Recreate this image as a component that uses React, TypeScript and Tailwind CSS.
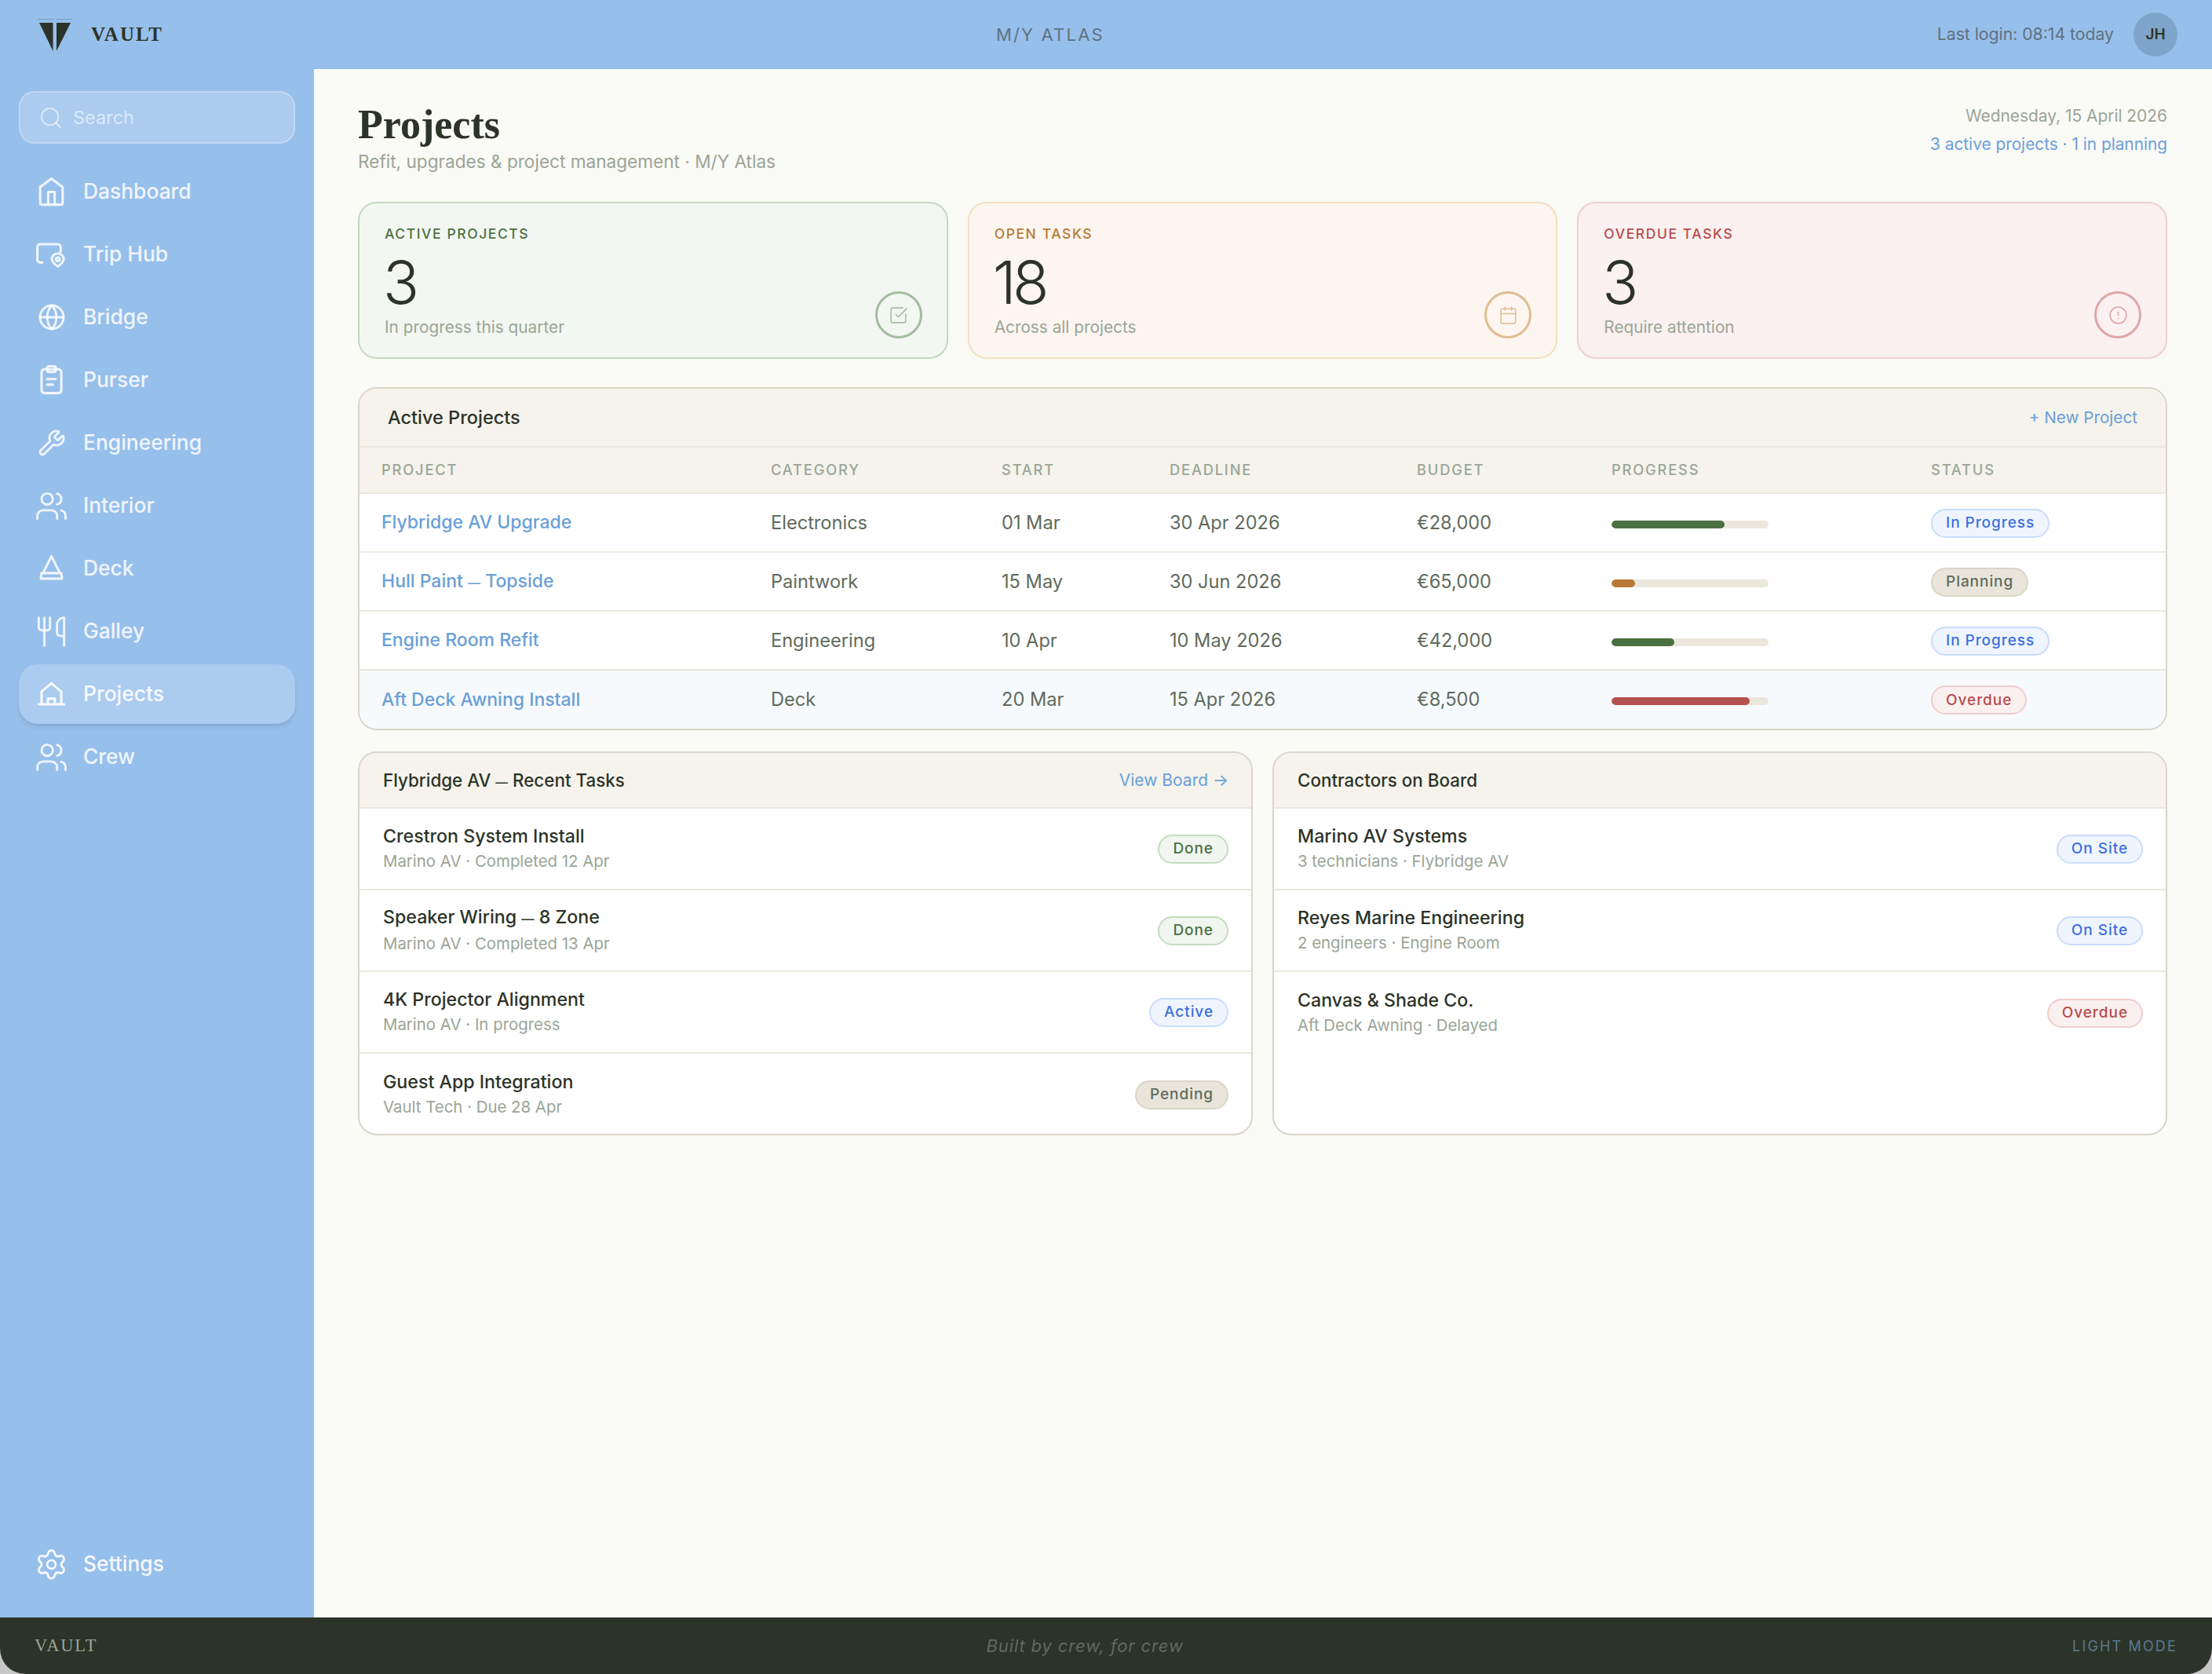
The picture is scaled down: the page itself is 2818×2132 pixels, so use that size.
import { Search, Settings, SquareCheckBig, Calendar, CircleAlert, Globe, Users, Utensils, Wrench } from "lucide-react";
import type { ReactNode } from "react";

const sans = "font-['Inter','Liberation_Sans',sans-serif]";
const serif = "font-['Liberation_Serif',serif]";

const Ico = ({ children }: { children: ReactNode }) => (
  <svg viewBox="0 0 24 24" fill="none" stroke="currentColor" strokeWidth="1.7" strokeLinecap="round" strokeLinejoin="round" className="w-[43px] h-[43px] shrink-0">
    {children}
  </svg>
);

const HomeIcon = () => (
  <Ico>
    <path d="M4 8.5l8-6 8 6V20a1 1 0 0 1-1 1H5a1 1 0 0 1-1-1z" />
    <path d="M9.7 21v-9h4.6v9" />
  </Ico>
);
const TripIcon = () => (
  <Ico>
    <path d="M5.5 17.5H4a2 2 0 0 1-2-2V6.5a2 2 0 0 1 2-2h12.5a2 2 0 0 1 2 2v3.5" />
    <path d="M16.5 11c2.3 0 4.2 1.8 4.2 4 0 2.2-2.4 4-4.2 5.3-1.8-1.3-4.2-3.1-4.2-5.3 0-2.2 1.9-4 4.2-4z" />
    <circle cx="16.5" cy="15.2" r="1.3" />
  </Ico>
);
const ClipIcon = () => (
  <Ico>
    <rect x="5" y="4" width="14" height="17" rx="2" />
    <rect x="9" y="2" width="6" height="4" rx="1" />
    <path d="M9 11h6M9 15h4" />
  </Ico>
);
const DeckIcon = () => (
  <Ico>
    <path d="M12 3L6 15M12 3l6 12M5 15h14l.5 4h-15z" />
  </Ico>
);
const ProjectIcon = () => (
  <Ico>
    <path d="M3 19h18M5 19v-9l7-6 7 6v9M9.5 19v-4h5v4" />
  </Ico>
);
const lucide = { className: "w-[43px] h-[43px] shrink-0", strokeWidth: 1.6 };
const lucideSmall = { className: "w-[36px] h-[36px] mx-[3.5px] shrink-0", strokeWidth: 1.9 };

const nav = [
  { label: "Dashboard", icon: <HomeIcon /> },
  { label: "Trip Hub", icon: <TripIcon /> },
  { label: "Bridge", icon: <Globe {...lucideSmall} /> },
  { label: "Purser", icon: <ClipIcon /> },
  { label: "Engineering", icon: <Wrench {...lucideSmall} /> },
  { label: "Interior", icon: <Users {...lucide} /> },
  { label: "Deck", icon: <DeckIcon /> },
  { label: "Galley", icon: <Utensils {...lucide} /> },
  { label: "Projects", icon: <ProjectIcon />, active: true },
  { label: "Crew", icon: <Users {...lucide} /> },
];

const stats = [
  { label: "Active Projects", value: "3", note: "In progress this quarter", card: "bg-[#f3f7f2] border-[#c3d9bf]", text: "text-[#4a7040]", ring: "border-[#a4bda0] text-[#a4bda0]", icon: <SquareCheckBig className="w-[25px] h-[25px]" strokeWidth={1.5} /> },
  { label: "Open Tasks", value: "18", note: "Across all projects", card: "bg-[#fdf6f0] border-[#f3dfbc]", text: "text-[#b87a35]", ring: "border-[#e0bd92] text-[#e0bd92]", icon: <Calendar className="w-[25px] h-[25px]" strokeWidth={1.5} /> },
  { label: "Overdue Tasks", value: "3", note: "Require attention", card: "bg-[#fbf1f1] border-[#f1cfcf]", text: "text-[#b84c4c]", ring: "border-[#dfa7a7] text-[#dfa7a7]", icon: <CircleAlert className="w-[25px] h-[25px]" strokeWidth={1.5} /> },
];

const tones = {
  blue: "bg-[#eff5ff] border-[#c8ddfc] text-[#3d6fe0]",
  grey: "bg-[#e9e5da] border-[#d9d5c8] text-[#5f6b5c]",
  red: "bg-[#fbf0f0] border-[#f1cdcd] text-[#b84c4c]",
  green: "bg-[#f1f6f0] border-[#c4dcc0] text-[#4a7040]",
};

const Badge = ({ tone, children }: { tone: keyof typeof tones; children: ReactNode }) => (
  <span className={`inline-flex items-center h-[37px] px-[17px] rounded-full border-2 text-[19px] font-medium tracking-[0.05em] whitespace-nowrap ${tones[tone]}`}>
    {children}
  </span>
);

// the em dash of the reference font is much shorter than Inter's
const Dashed = ({ text }: { text: string }) => {
  const [head, tail] = text.split(" — ");
  if (!tail) return <>{text}</>;
  return (
    <>
      {head} <span className="text-[0.7em]">—</span> {tail}
    </>
  );
};

const projects = [
  { name: "Flybridge AV Upgrade", category: "Electronics", start: "01 Mar", deadline: "30 Apr 2026", budget: "€28,000", pct: 72, bar: "bg-[#4a7040]", tone: "blue" as const, status: "In Progress" },
  { name: "Hull Paint — Topside", category: "Paintwork", start: "15 May", deadline: "30 Jun 2026", budget: "€65,000", pct: 15, bar: "bg-[#b87a35]", tone: "grey" as const, status: "Planning" },
  { name: "Engine Room Refit", category: "Engineering", start: "10 Apr", deadline: "10 May 2026", budget: "€42,000", pct: 40, bar: "bg-[#4a7040]", tone: "blue" as const, status: "In Progress" },
  { name: "Aft Deck Awning Install", category: "Deck", start: "20 Mar", deadline: "15 Apr 2026", budget: "€8,500", pct: 88, bar: "bg-[#b5524f]", tone: "red" as const, status: "Overdue", tint: true },
];

const columns = [
  { label: "Project", w: "w-[496px]" },
  { label: "Category", w: "w-[294px]" },
  { label: "Start", w: "w-[214px]" },
  { label: "Deadline", w: "w-[315px]" },
  { label: "Budget", w: "w-[248px]" },
  { label: "Progress", w: "w-[407px]" },
  { label: "Status", w: "" },
];

const tasks = [
  { title: "Crestron System Install", sub: "Marino AV · Completed 12 Apr", tone: "green" as const, badge: "Done" },
  { title: "Speaker Wiring — 8 Zone", sub: "Marino AV · Completed 13 Apr", tone: "green" as const, badge: "Done" },
  { title: "4K Projector Alignment", sub: "Marino AV · In progress", tone: "blue" as const, badge: "Active" },
  { title: "Guest App Integration", sub: "Vault Tech · Due 28 Apr", tone: "grey" as const, badge: "Pending" },
];

const contractors = [
  { title: "Marino AV Systems", sub: "3 technicians · Flybridge AV", tone: "blue" as const, badge: "On Site" },
  { title: "Reyes Marine Engineering", sub: "2 engineers · Engine Room", tone: "blue" as const, badge: "On Site" },
  { title: "Canvas & Shade Co.", sub: "Aft Deck Awning · Delayed", tone: "red" as const, badge: "Overdue" },
];

type Item = (typeof tasks)[number] | (typeof contractors)[number];

const ListCard = ({ title, action, items }: { title: string; action?: string; items: Item[] }) => (
  <div className="flex-1 h-[489px] rounded-[24px] border-2 border-[#d9d5c8] bg-white overflow-hidden">
    <div className="h-[71px] pl-[30px] pr-[29px] flex items-center justify-between bg-[#f5f3ec] border-b-2 border-[#ebe7dd]">
      <h3 className="text-[22.4px] font-medium text-[#2c3328]">
        <Dashed text={title} />
      </h3>
      {action && <span className="text-[21px] text-[#6a9fd8]">{action}</span>}
    </div>
    {items.map((item, i) => (
      <div key={item.title} className={`h-[104px] pl-[30px] pr-[29px] flex items-center justify-between ${i < 3 && i < items.length - 1 ? "border-b-2 border-[#ebe7dd]" : ""}`}>
        <div>
          <div className="text-[23.2px] leading-[32px] font-medium text-[#2c3328]">
            <Dashed text={item.title} />
          </div>
          <div className="text-[20.4px] leading-[32px] text-[#9aa596]">{item.sub}</div>
        </div>
        <Badge tone={item.tone}>{item.badge}</Badge>
      </div>
    ))}
  </div>
);

export default function App() {
  return (
    <div className={`h-screen w-full bg-[#c8c8c8] ${sans}`}>
      <div className="h-full flex flex-col rounded-b-[32px] overflow-hidden bg-[#fafaf7]">
        {/* Top bar */}
        <header className="h-[88px] shrink-0 bg-[#97bfeb] flex items-center justify-between pl-[48px] pr-[44px]">
          <div className="flex items-center gap-[24px]">
            <svg viewBox="0 0 44 45" className="w-[44px] h-[45px]">
              <path d="M0 2.5h20M24 2.5h20" stroke="#2c3328" strokeOpacity=".25" strokeWidth="1" />
              <path d="M2 7h17.5v36zM24 7h18L24 43z" fill="#2c3328" />
            </svg>
            <span className={`${serif} text-[25px] font-bold tracking-[0.08em] text-[#2c3328]`}>VAULT</span>
          </div>
          <div className="text-[22px] tracking-[0.1em] text-[#5f7280]">M/Y ATLAS</div>
          <div className="flex items-center gap-[25px]">
            <span className="text-[21.2px] text-[#5f7280]">Last login: 08:14 today</span>
            <div className="w-[56px] h-[56px] rounded-full bg-[#7fa5ca] flex items-center justify-center text-[19px] font-semibold text-[#2c3328]">JH</div>
          </div>
        </header>

        <div className="flex flex-1 min-h-0">
          {/* Sidebar */}
          <aside className="w-[400px] shrink-0 bg-[#97bfeb] flex flex-col px-[24px] pt-[28px] pb-[30px]">
            <div className="h-[67px] rounded-[20px] border-2 border-white/25 bg-white/20 flex items-center pl-[23px] gap-[12px] text-white/60">
              <Search className="w-[32px] h-[32px]" strokeWidth={1.5} />
              <span className="text-[23.5px]">Search</span>
            </div>
            <nav className="mt-[23px] flex flex-col gap-[4px]">
              {nav.map((item) => (
                <div key={item.label} className={`h-[76px] rounded-[24px] pl-[20px] flex items-center gap-[19px] text-[26.4px] font-medium ${item.active ? "bg-white/20 shadow-md text-white/90" : "text-white/85"}`}>
                  {item.icon}
                  <span>{item.label}</span>
                </div>
              ))}
            </nav>
            <div className="mt-auto h-[76px] pl-[20px] flex items-center gap-[19px] text-[26.4px] font-medium text-white/90">
              <Settings {...lucide} />
              <span>Settings</span>
            </div>
          </aside>

          {/* Main */}
          <main className="flex-1 pl-[56px] pr-[57px] pt-[40px]">
            <div className="flex items-start justify-between h-[129px]">
              <div>
                <h1 className={`${serif} text-[52px] leading-[62px] font-bold text-[#2c3328]`}>Projects</h1>
                <p className="text-[22.6px] leading-[32px] text-[#9aa596]">Refit, upgrades &amp; project management · M/Y Atlas</p>
              </div>
              <div className="text-right pt-[2px]">
                <div className="text-[20.9px] leading-[36px] text-[#9aa596]">Wednesday, 15 April 2026</div>
                <div className="text-[20.8px] leading-[36px] text-[#6a9fd8]">3 active projects · 1 in planning</div>
              </div>
            </div>

            <div className="flex gap-[25px]">
              {stats.map((s) => (
                <div key={s.label} className={`flex-1 h-[200px] rounded-[24px] border-2 px-[32px] pt-[27px] relative ${s.card}`}>
                  <div className={`text-[17.5px] leading-[24px] font-medium uppercase tracking-[0.09em] ${s.text}`}>{s.label}</div>
                  <div className="mt-[7px] -ml-[2px] text-[76px] leading-[84px] font-light tracking-[-0.06em] text-[#2c3328]">{s.value}</div>
                  <div className="mt-[1px] text-[20.8px] leading-[30px] text-[#9aa596]">{s.note}</div>
                  <div className={`absolute right-[31px] bottom-[24px] w-[60px] h-[60px] rounded-full border-[3px] flex items-center justify-center ${s.ring}`}>{s.icon}</div>
                </div>
              ))}
            </div>

            <section className="mt-[36px] rounded-[24px] border-2 border-[#d9d5c8] bg-white overflow-hidden">
              <div className="h-[75px] px-[36px] flex items-center justify-between bg-[#f5f3ec] border-b-2 border-[#ebe7dd]">
                <h2 className="text-[23.5px] font-medium text-[#2c3328]">Active Projects</h2>
                <span className="text-[20.7px] text-[#6a9fd8]">+ New Project</span>
              </div>
              <table className="w-full table-fixed border-collapse">
                <thead>
                  <tr className="h-[58px] bg-[#f5f3ec] border-b-2 border-[#ebe7dd]">
                    {columns.map((c) => (
                      <th key={c.label} className={`${c.w} pl-[28px] text-left text-[18.3px] font-medium uppercase tracking-[0.1em] text-[#9aa596]`}>{c.label}</th>
                    ))}
                  </tr>
                </thead>
                <tbody>
                  {projects.map((p, i) => (
                    <tr key={p.name} className={`h-[75px] text-[23.6px] text-[#5f6b5c] ${i < 3 ? "border-b-2 border-[#ebe7dd]" : ""} ${p.tint ? "bg-[#f7fafd]" : ""}`}>
                      <td className="pl-[28px] text-[23px] font-medium text-[#6a9fd8]">
                        <Dashed text={p.name} />
                      </td>
                      <td className="pl-[28px]">{p.category}</td>
                      <td className="pl-[28px]">{p.start}</td>
                      <td className="pl-[28px]">{p.deadline}</td>
                      <td className="pl-[28px]">{p.budget}</td>
                      <td className="pl-[28px]">
                        <div className="w-[200px] h-[10px] mt-[4px] rounded-full bg-[#ebe7dd] overflow-hidden">
                          <div className={`h-full rounded-full ${p.bar}`} style={{ width: `${p.pct}%` }} />
                        </div>
                      </td>
                      <td className="pl-[28px]">
                        <Badge tone={p.tone}>{p.status}</Badge>
                      </td>
                    </tr>
                  ))}
                </tbody>
              </table>
            </section>

            <div className="mt-[27px] flex gap-[25px]">
              <ListCard title="Flybridge AV — Recent Tasks" action="View Board →" items={tasks} />
              <ListCard title="Contractors on Board" items={contractors} />
            </div>
          </main>
        </div>

        {/* Footer */}
        <footer className="h-[72px] shrink-0 bg-[#2c3328] flex items-center justify-between px-[44px]">
          <span className={`${serif} text-[22.5px] tracking-[0.08em] text-[#9aa596]`}>VAULT</span>
          <span className="text-[22px] italic tracking-[0.04em] text-[#5f6b5c]">Built by crew, for crew</span>
          <span className="text-[18px] tracking-[0.12em] text-[#5a7a90]">LIGHT MODE</span>
        </footer>
      </div>
    </div>
  );
}
